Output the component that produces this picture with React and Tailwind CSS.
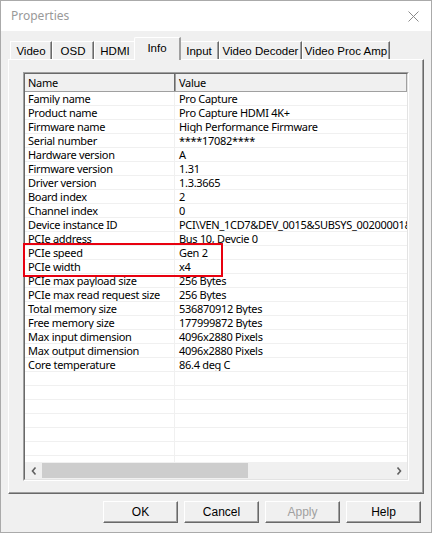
import React from "react";

const rows = [
  ["Family name", "Pro Capture"],
  ["Product name", "Pro Capture HDMI 4K+"],
  ["Firmware name", "High Performance Firmware"],
  ["Serial number", "****17082****"],
  ["Hardware version", "A"],
  ["Firmware version", "1.31"],
  ["Driver version", "1.3.3665"],
  ["Board index", "2"],
  ["Channel index", "0"],
  ["Device instance ID", "PCI\\VEN_1CD7&DEV_0015&SUBSYS_00200001&REV_00"],
  ["PCIe address", "Bus 10, Devcie 0"],
  ["PCIe speed", "Gen 2"],
  ["PCIe width", "x4"],
  ["PCIe max payload size", "256 Bytes"],
  ["PCIe max read request size", "256 Bytes"],
  ["Total memory size", "536870912 Bytes"],
  ["Free memory size", "177999872 Bytes"],
  ["Max input dimension", "4096x2880 Pixels"],
  ["Max output dimension", "4096x2880 Pixels"],
  ["Core temperature", "86.4 deg C"],
  ["", ""],
  ["", ""],
  ["", ""],
  ["", ""],
  ["", ""],
  ["", ""],
  ["", ""],
];

const tabs = ["Video", "OSD", "HDMI", "Info", "Input", "Video Decoder", "Video Proc Amp"];
const tabWidths = [42, 42, 42, 43, 40, 83, 88];

function Tab({ label, selected, width }) {
  if (selected) {
    return (
      <div
        className="relative z-10 -mx-[2px] h-[23px] -mb-[1px] flex items-start justify-center pt-[2px] bg-[#f0f0f0] border-t border-l border-white border-r-2 border-r-[#a0a0a0] rounded-tl-[2px]"
        style={{ width: width + 4 }}
      >
        <span>{label}</span>
      </div>
    );
  }
  return (
    <div
      className="h-[18px] flex items-center justify-center bg-[#f0f0f0] border-t border-l border-white border-r border-r-[#696969] shadow-[inset_-1px_0_0_#a0a0a0] pt-[2px]"
      style={{ width }}
    >
      <span>{label}</span>
    </div>
  );
}

function Button({ children, disabled }) {
  return (
    <div
      className={`w-[75px] h-[22px] flex items-center justify-center bg-[#f0f0f0] border border-t-white border-l-white border-r-[#696969] border-b-[#696969] shadow-[inset_-1px_-1px_0_#a0a0a0] ${
        disabled ? "text-[#a0a0a0]" : "text-black"
      }`}
    >
      {children}
    </div>
  );
}

export default function App() {
  return (
    <div
      className="w-[432px] h-[533px] border border-[#aaaaaa] bg-[#f0f0f0] flex flex-col overflow-hidden text-black"
      style={{ fontFamily: '"Liberation Sans", Arial, sans-serif' }}
    >
      {/* Title bar */}
      <div className="h-[30px] bg-white flex items-center justify-between pl-[10px] pr-[12px] shrink-0">
        <span
          className="text-[12px] text-[#999999]"
          style={{ fontFamily: '"Noto Sans", sans-serif' }}
        >
          Properties
        </span>
        <svg width="11" height="11" viewBox="0 0 11 11">
          <path d="M0.5 0.5 L10.5 10.5 M10.5 0.5 L0.5 10.5" stroke="#8a8a8a" strokeWidth="1" />
        </svg>
      </div>

      {/* Tabs */}
      <div className="flex items-end pl-[9px] pt-[6px] h-[28px] text-[11.5px] shrink-0">
        {tabs.map((t, i) => (
          <Tab key={t} label={t} selected={t === "Info"} width={tabWidths[i]} />
        ))}
      </div>

      {/* Panel */}
      <div className="mx-[7px] h-[435px] border-t border-l border-white border-r border-b border-r-[#696969] border-b-[#696969] shadow-[inset_-1px_-1px_0_#a0a0a0] pt-[12px] pl-[14px] pr-[14px]">
        <div className="relative h-[409px] border border-t-[#a0a0a0] border-l-[#a0a0a0] border-r-white border-b-white">
          <div
            className="h-full border border-t-[#696969] border-l-[#696969] border-r-[#e3e3e3] border-b-[#e3e3e3] bg-white flex flex-col overflow-hidden"
            style={{ fontFamily: '"Noto Sans", sans-serif' }}
          >
            {/* Header */}
            <div className="flex h-[18px] shrink-0 bg-[#f0f0f0] text-[11px] tracking-[-0.3px] border-b border-[#a0a0a0]">
              <div className="w-[150px] pl-[3px] flex items-center border-r border-[#696969] shadow-[1px_0_0_#a0a0a0] leading-none">
                Name
              </div>
              <div className="flex-1 pl-[4px] flex items-center leading-none border-r border-[#a0a0a0]">
                Value
              </div>
            </div>
            {/* Rows */}
            <div className="flex-1 overflow-hidden text-[11px] tracking-[-0.3px]">
              {rows.map(([n, v], i) => (
                <div key={i} className="flex h-[14px] border-b border-[#f0f0f0] leading-[13px]">
                  <div className="w-[150px] pl-[3px] border-r border-[#f0f0f0] whitespace-nowrap overflow-hidden">
                    {n}
                  </div>
                  <div className="flex-1 pl-[4px] whitespace-nowrap overflow-hidden">{v}</div>
                </div>
              ))}
            </div>
            {/* Horizontal scrollbar */}
            <div className="h-[17px] shrink-0 bg-[#f0f0f0] flex items-center">
              <div className="w-[17px] h-[17px] flex items-center justify-center">
                <svg width="6" height="8" viewBox="0 0 6 8">
                  <path d="M4.5 0.5 L1.5 4 L4.5 7.5" stroke="#606060" strokeWidth="1.6" fill="none" />
                </svg>
              </div>
              <div className="flex-1 h-full flex items-center">
                <div className="w-[206px] h-[15px] bg-[#cdcdcd]" />
              </div>
              <div className="w-[17px] h-[17px] flex items-center justify-center">
                <svg width="6" height="8" viewBox="0 0 6 8">
                  <path d="M1.5 0.5 L4.5 4 L1.5 7.5" stroke="#606060" strokeWidth="1.6" fill="none" />
                </svg>
              </div>
            </div>
          </div>
          {/* Red highlight box */}
          <div className="absolute left-[-1px] top-[170px] w-[200px] h-[34px] border-2 border-[#e8000f]" />
        </div>
      </div>

      {/* Buttons */}
      <div className="flex justify-end gap-[6px] pr-[10px] pt-[7px] text-[12px]">
        <Button>OK</Button>
        <Button>Cancel</Button>
        <Button disabled>Apply</Button>
        <Button>Help</Button>
      </div>
    </div>
  );
}
